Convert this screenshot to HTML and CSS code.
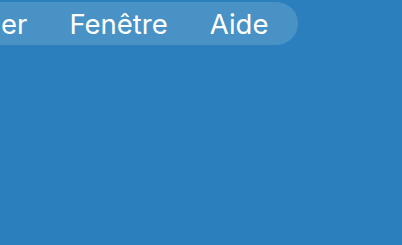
FILE: index.html
```html
<!DOCTYPE html>
<html lang="fr">
<head>
<meta charset="utf-8">
<link rel="stylesheet" href="styles.css">
</head>
<body>
<div class="desktop">
  <nav class="menubar">
    <span class="item">er</span>
    <span class="item">Fenêtre</span>
    <span class="item">Aide</span>
  </nav>
</div>
</body>
</html>
```

FILE: styles.css
```css
html, body {
  margin: 0;
  padding: 0;
  width: 402px;
  height: 245px;
  overflow: hidden;
}
.desktop {
  width: 402px;
  height: 245px;
  background: #2a7fbc;
  padding-top: 2px;
  box-sizing: border-box;
}
.menubar {
  display: flex;
  align-items: center;
  gap: 42px;
  width: 298px;
  height: 43px;
  box-sizing: border-box;
  padding: 3px 32px 0 1px;
  background: rgba(255, 255, 255, 0.15);
  border-radius: 0 22px 22px 0;
  font-family: Inter, "Noto Sans", sans-serif;
  font-size: 27.5px;
  color: #ffffff;
  line-height: 1;
}
.item {
  white-space: nowrap;
}
```
